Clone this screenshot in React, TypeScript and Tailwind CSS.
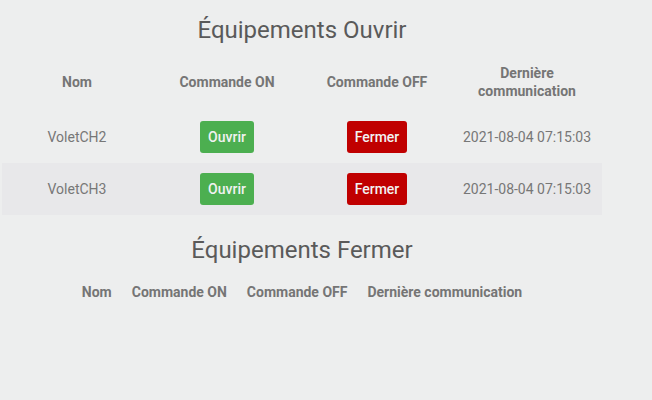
import React from "react";

const rows = [
  { nom: "VoletCH2", date: "2021-08-04 07:15:03" },
  { nom: "VoletCH3", date: "2021-08-04 07:15:03" },
];

const headers = ["Nom", "Commande ON", "Commande OFF", "Dernière communication"];

export default function App() {
  return (
    <div
      className="w-[652px] h-[400px] bg-[#edeeee] text-[#555]"
      style={{ fontFamily: "Roboto, 'Liberation Sans', sans-serif" }}
    >
      <div className="w-[600px] ml-[2px] pt-[16px]">
        {/* Équipements ouverts */}
        <h1 className="text-center text-[24px] leading-[28px] font-normal text-[#5a5a5a]">
          Équipements Ouvrir
        </h1>
        <table className="mt-[8px] w-[600px] table-fixed border-collapse">
          <thead>
            <tr>
              {headers.map((h) => (
                <th
                  key={h}
                  className="px-[10px] pt-[12px] pb-[11px] text-center text-[14px] leading-[18px] font-bold text-[#757575] align-middle"
                >
                  {h}
                </th>
              ))}
            </tr>
          </thead>
          <tbody>
            {rows.map((r, i) => (
              <tr key={r.nom} className={i % 2 === 1 ? "bg-[#e8e8ea]" : ""}>
                <td className="py-[10px] text-center text-[14px] text-[#777]">{r.nom}</td>
                <td className="py-[10px] text-center">
                  <button className="h-[32px] px-[8px] rounded-[3px] bg-[#4caf50] text-[#f2f2f2] text-[14px] font-medium">
                    Ouvrir
                  </button>
                </td>
                <td className="py-[10px] text-center">
                  <button className="h-[32px] px-[8px] rounded-[3px] bg-[#c00000] text-[#f2f2f2] text-[14px] font-medium">
                    Fermer
                  </button>
                </td>
                <td className="py-[10px] text-center text-[14px] text-[#777]">{r.date}</td>
              </tr>
            ))}
          </tbody>
        </table>

        {/* Équipements fermés */}
        <h1 className="mt-[21px] text-center text-[24px] leading-[28px] font-normal text-[#5a5a5a]">
          Équipements Fermer
        </h1>
        <table className="mt-[7px] mx-auto border-collapse">
          <thead>
            <tr>
              {headers.map((h) => (
                <th
                  key={h}
                  className="px-[10px] py-[12px] text-center text-[14px] leading-[18px] font-bold text-[#757575] whitespace-nowrap"
                >
                  {h}
                </th>
              ))}
            </tr>
          </thead>
          <tbody />
        </table>
      </div>
    </div>
  );
}
